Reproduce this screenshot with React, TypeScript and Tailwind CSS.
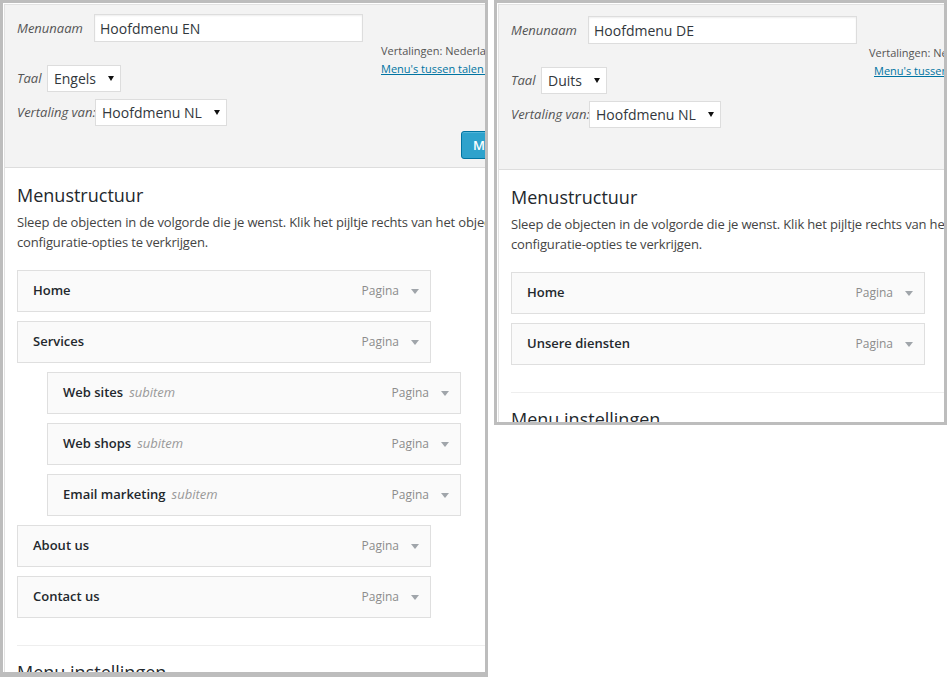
import React from 'react';

type Item = { title: string; sub?: boolean };

function Caret() {
    return (
        <svg width="8" height="5" viewBox="0 0 8 5" className="text-[#a0a5aa]">
            <path d="M0 0h8L4 5z" fill="currentColor" />
        </svg>
    );
}

function SelectBox({ value }: { value: string }) {
    return (
        <div className="flex h-[27px] items-center gap-[12px] border border-[#dddddd] bg-white pl-[6px] pr-[6px] text-[14px] text-[#32373c]">
            <span>{value}</span>
            <svg width="6" height="5" viewBox="0 0 6 5">
                <path d="M0 0h6L3 5z" fill="#111111" />
            </svg>
        </div>
    );
}

function MenuItem({ title, sub }: Item) {
    return (
        <div
            className={`flex h-[42px] w-[414px] shrink-0 items-center justify-between border border-[#dfdfdf] bg-[#fafafa] pl-[15px] pr-[11px] ${sub ? 'ml-[30px]' : ''}`}
        >
            <div className="flex items-center whitespace-nowrap">
                <span className="text-[13px] font-semibold text-[#23282d]">{title}</span>
                {sub && <span className="ml-[6px] text-[13px] italic text-[#999999]">subitem</span>}
            </div>
            <div className="flex items-center gap-[12px]">
                <span className="text-[12px] text-[#8c8c8c]">Pagina</span>
                <Caret />
            </div>
        </div>
    );
}

function Panel({
    name,
    lang,
    items,
    wide,
}: {
    name: string;
    lang: string;
    items: Item[];
    wide: boolean;
}) {
    return (
        <div
            className={`shrink-0 overflow-hidden border-[3px] border-[#bdbdbd] bg-white ${wide ? 'h-[677px] w-[488px] border-b-[5px]' : 'h-[425px] w-[453px]'}`}
        >
            <div className="ml-px mt-px h-full border-l border-t border-[#e2e2e2]">
                {/* header with name / language */}
                <div className={`flex border-b border-[#dddddd] bg-[#f3f3f3] pb-[8px] pl-[12px] ${wide ? 'pt-[9px]' : 'pt-[11px]'}`}>
                    <div className={`shrink-0 ${wide ? 'w-[364px]' : 'w-[358px]'}`}>
                        <div className="flex h-[28px] items-center">
                            <span className="mt-px w-[77px] text-[13px] italic text-[#555555]">Menunaam</span>
                            <div className="flex h-[28px] w-[269px] items-center border border-[#dddddd] bg-white pl-[5px] text-[14px] text-[#32373c] shadow-[inset_0_1px_2px_rgba(0,0,0,0.07)]">
                                {name}
                            </div>
                        </div>
                        <div className="mt-[23px] flex items-center">
                            <span className="w-[30px] text-[13px] italic text-[#555555]">Taal</span>
                            <SelectBox value={lang} />
                        </div>
                        <div className="mt-[7px] flex items-center">
                            <span className="w-[78px] whitespace-nowrap text-[13px] italic text-[#555555]">Vertaling van:</span>
                            <SelectBox value="Hoofdmenu NL" />
                        </div>
                    </div>
                    <div className="shrink-0 whitespace-nowrap pt-[28px] text-[11px] leading-[18px] text-[#555555]">
                        <div>Vertalingen: Nederlands, Engels, Duits</div>
                        <div className={wide ? '' : 'ml-[5px]'}>
                            <a className="text-[#0074a2] underline">Menu's tussen talen synchroniseren</a>
                        </div>
                        <button className={`mt-[53px] flex h-[28px] items-center rounded-[3px] border border-[#0074a2] bg-[#2ea2cc] px-[11px] text-[13px] font-semibold text-white shadow-[inset_0_1px_0_rgba(120,200,230,0.5)] ${wide ? 'ml-[80px]' : 'ml-[86px]'}`}>
                            Menu opslaan
                        </button>
                    </div>
                </div>

                {/* menu structure */}
                <div className="pl-[12px] pt-[15px]">
                    <h3 className="whitespace-nowrap text-[18px] font-normal leading-[24px] text-[#23282d]">Menustructuur</h3>
                    <p className="mt-[5px] whitespace-nowrap text-[13px] leading-[20px] tracking-[-0.15px] text-[#444444]">
                        Sleep de objecten in de volgorde die je wenst. Klik het pijltje rechts van het object om extra
                        <br />
                        configuratie-opties te verkrijgen.
                    </p>
                    <div className="mt-[18px] flex flex-col gap-[9px]">
                        {items.map((it) => (
                            <MenuItem key={it.title} title={it.title} sub={it.sub} />
                        ))}
                    </div>
                    <div className="mt-[27px] border-t border-[#eeeeee]" />
                    <h3 className="mt-[14px] whitespace-nowrap text-[18px] font-normal leading-[24px] text-[#23282d]">Menu instellingen</h3>
                </div>
            </div>
        </div>
    );
}

export default function App() {
    return (
        <div className="flex h-[677px] w-[947px] items-start gap-[6px] overflow-hidden bg-white font-['Open_Sans',sans-serif]">
            <Panel
                wide
                name="Hoofdmenu EN"
                lang="Engels"
                items={[
                    { title: 'Home' },
                    { title: 'Services' },
                    { title: 'Web sites', sub: true },
                    { title: 'Web shops', sub: true },
                    { title: 'Email marketing', sub: true },
                    { title: 'About us' },
                    { title: 'Contact us' },
                ]}
            />
            <Panel
                wide={false}
                name="Hoofdmenu DE"
                lang="Duits"
                items={[{ title: 'Home' }, { title: 'Unsere diensten' }]}
            />
        </div>
    );
}
